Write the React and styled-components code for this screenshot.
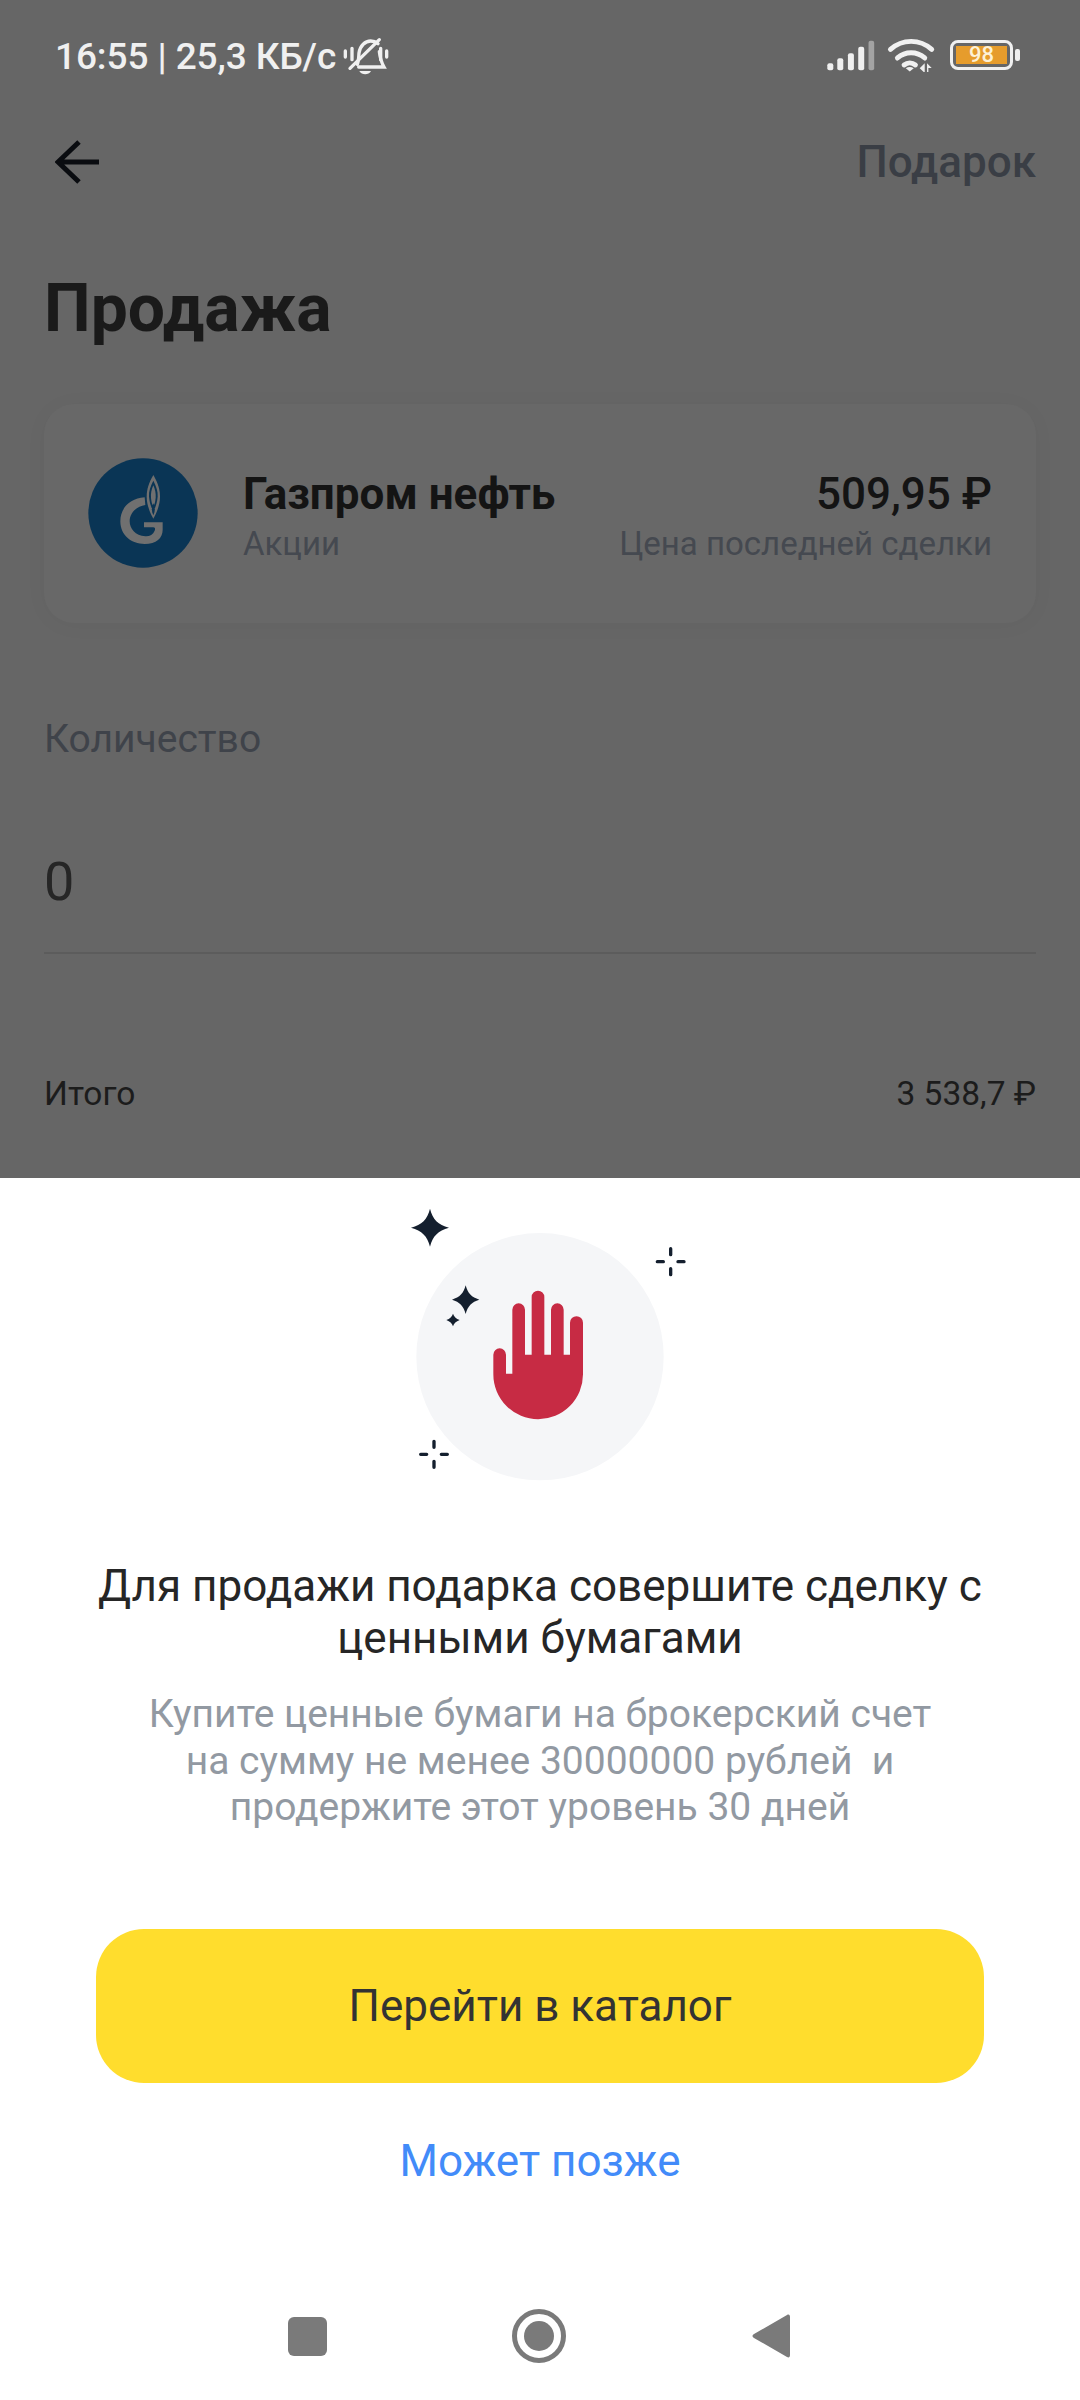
import styled, { createGlobalStyle } from 'styled-components'

const GlobalStyle = createGlobalStyle`
	html, body {
		margin: 0;
		padding: 0;
		background: #fff;
	}
	* {
		box-sizing: border-box;
	}
	body {
		font-family: Roboto, "Noto Sans", sans-serif;
	}
`

const Screen = styled.div`
	width: 1080px;
	height: 2400px;
	display: flex;
	flex-direction: column;
	overflow: hidden;
`

const Dimmed = styled.div`
	height: 1178px;
	background: #666666;
	padding: 0 44px;
	overflow: hidden;
`

const StatusBar = styled.div`
	height: 112px;
	display: flex;
	align-items: center;
	justify-content: space-between;
	padding: 0 0 0 11px;
	color: #f0f0f0;
`

const StatusLeft = styled.div`
	display: flex;
	align-items: center;
	gap: 4px;
	font-size: 37px;
	font-weight: 500;
	letter-spacing: -0.1px;
`

const StatusRight = styled.div`
	display: flex;
	align-items: center;
	gap: 7px;
	margin-right: 23px;
	margin-bottom: 2px;
`

const Battery = styled.div`
	width: 63px;
	height: 30px;
	border: 3px solid #f0f0f0;
	border-radius: 8px;
	padding: 3px;
	position: relative;
	&::after {
		content: '';
		position: absolute;
		right: -10px;
		top: 6px;
		width: 5px;
		height: 12px;
		border-radius: 2px;
		background: #f0f0f0;
	}
`

const BatteryFill = styled.div`
	height: 100%;
	background: #e69c2c;
	color: #fdf1d6;
	font-size: 22px;
	font-weight: 500;
	line-height: 18px;
	text-align: center;
`

const NavRow = styled.div`
	margin-top: 12px;
	height: 76px;
	display: flex;
	align-items: center;
	justify-content: space-between;
	padding-left: 11px;
	color: #3a3e45;
	font-size: 44px;
	font-weight: 500;
`

const Title = styled.h1`
	margin: 71px 0 0;
	font-size: 66px;
	line-height: 76px;
	font-weight: 700;
	color: #1a1a1a;
`

const Card = styled.div`
	margin-top: 57px;
	height: 219px;
	background: #686868;
	border-radius: 30px;
	box-shadow: 0 2px 24px rgba(0, 0, 0, 0.03);
	padding: 0 44px 2px;
	display: flex;
	align-items: center;
	gap: 45px;
`

const CardInfo = styled.div`
	flex: ${props => (props.$right ? 'none' : 1)};
	display: flex;
	flex-direction: column;
	gap: 6px;
	padding-top: 6px;
	align-items: ${props => (props.$right ? 'flex-end' : 'flex-start')};
	white-space: nowrap;
`

const CardTitle = styled.div`
	font-size: 44px;
	line-height: 50px;
	font-weight: ${props => props.$weight || 700};
	color: #141414;
`

const CardSub = styled.div`
	font-size: 33px;
	line-height: 38px;
	color: #454950;
`

const FieldLabel = styled.div`
	margin-top: 95px;
	font-size: 39px;
	line-height: 42px;
	color: #3f434a;
`

const FieldInput = styled.div`
	margin-top: 90px;
	height: 104px;
	font-size: 54px;
	line-height: 64px;
	color: #262626;
	border-bottom: 2px solid #5c5c5c;
`

const TotalRow = styled.div`
	margin-top: 121px;
	display: flex;
	justify-content: space-between;
	font-size: 33.500px;
	line-height: 38px;
	color: #1c1c1c;
`

const Sheet = styled.div`
	flex: 1;
	background: #fff;
	padding-top: 2px;
	display: flex;
	flex-direction: column;
	align-items: center;
`

const Heading = styled.div`
	width: 900px;
	margin-top: 60px;
	text-align: center;
	font-size: 44px;
	line-height: 52px;
	color: #262626;
`

const Description = styled.div`
	margin-top: 27px;
	text-align: center;
	font-size: 39px;
	line-height: 46.500px;
	color: #9299a2;
	white-space: pre-wrap;
`

const PrimaryButton = styled.button`
	margin-top: 98px;
	width: 888px;
	height: 154px;
	flex-shrink: 0;
	border: 0;
	border-radius: 48px;
	background: #ffdd2d;
	color: #333333;
	font-family: inherit;
	font-size: 44px;
`

const TextButton = styled.button`
	margin-top: 53px;
	border: 0;
	padding: 0;
	background: none;
	color: #428bf9;
	font-family: inherit;
	font-size: 44px;
	line-height: 50px;
`

const SystemNav = styled.div`
	margin-top: auto;
	height: 92px;
	margin-bottom: 18px;
	width: 100%;
	display: flex;
	align-items: center;
	justify-content: center;
	padding-right: 3px;
`

const BellIcon = () => (
	<svg width="60" height="50" viewBox="0 0 180 150">
		<g fill="none" stroke="#f0f0f0" strokeWidth="10" strokeLinecap="round">
			<path d="M16 60v18M36 52v34M122 52v34M140 60v18" />
			<path d="M52 100c4-10 4-22 5-34C60 44 76 30 92 30c8 0 16 3 22 8" />
			<path d="M118 62c2 18 6 32 14 46H56" />
			<path d="M30 112 118 26" />
		</g>
		<path d="M58 120c7 13 28 13 35 0z" fill="#f0f0f0" />
	</svg>
)

const SignalWifi = () => (
	<svg width="123" height="50" viewBox="0 0 370 150">
		<g fill="#f0f0f0">
			<rect x="22" y="100" width="18" height="21" rx="6" />
			<rect x="52" y="85" width="18" height="36" rx="6" />
			<rect x="84" y="70" width="18" height="51" rx="6" />
			<rect x="115" y="50" width="18" height="71" rx="6" />
		</g>
		<rect x="146" y="32" width="17" height="89" rx="6" fill="#a3a3a3" />
		<g fill="none" stroke="#f0f0f0" strokeWidth="15" strokeLinecap="round">
			<path d="M212 58c36-32 88-32 124 0" />
			<path d="M233 84c24-21 58-21 82 0" />
			<path d="M253 105c10-8 24-8 34 0" />
		</g>
		<path d="M258 115c7-5 17-5 24 0l-12 10z" fill="#f0f0f0" />
		<path d="M315 100v26h-3l-12-11zM322 100v26h4v-12h10z" fill="#f0f0f0" />
	</svg>
)

const BackArrow = () => (
	<svg width="44" height="44" viewBox="0 0 44 44" fill="none" stroke="#0a0c10" strokeWidth="5">
		<path d="M44 22H4M24 2 3 22l21 20" />
	</svg>
)

const GazpromLogo = () => (
	<svg width="110" height="110" viewBox="0 0 330 330">
		<circle cx="165" cy="165" r="164" fill="#0a3555" />
		<path
			d="M170 118C125 122 97 150 97 190c0 42 33 68 73 68 35 0 54-18 54-43v-22h-56v15h28c6 0 6 6 4 10-5 12-16 18-28 17-30-2-47-23-47-45 0-25 20-45 47-49z"
			fill="#707070"
		/>
		<path d="M196 51c-14 24-20 44-20 65 0 24 10 49 20 66 10-17 20-42 20-66 0-21-6-41-20-65z" fill="#707070" />
		<path d="M196 68c-9 17-14 32-13 48 1 14 5 26 8 34h10c3-8 7-20 8-34 1-16-4-31-13-48z" fill="#0a3555" />
		<path d="M196 82c-6 13-8 26-7 38 1 10 3 18 5 22h4c2-4 4-12 5-22 1-12-1-25-7-38z" fill="#707070" />
		<path d="M196 136c-6 12-6 24 0 36 6-12 6-24 0-36z" fill="#0a3555" />
	</svg>
)

const HandIllustration = () => (
	<svg width="320" height="320" viewBox="0 0 960 960">
		<circle cx="480" cy="530" r="371" fill="#f5f6f8" />
		<path
			d="M340 524a19 19 0 0 1 38 0v57h19V389a19 19 0 0 1 38 0v135h20V351a19 19 0 0 1 38 0v173h20V389a19 19 0 0 1 38 0v135h19V428a19.500 19.500 0 0 1 39 0v155a134.500 134.500 0 0 1-269 0z"
			fill="#c72b44"
		/>
		<g fill="#141f2e">
			<path d="M150 86c8 32 24 48 57 57-33 9-49 25-57 57-8-32-24-48-57-57 33-9 49-25 57-57z" />
			<path d="M257 316c6 24 18 36 41 43-23 7-35 19-41 43-6-24-18-36-41-43 23-7 35-19 41-43z" />
			<path d="M219 401c3 9 9 15 20 19-11 4-17 10-20 19-3-9-9-15-20-19 11-4 17-10 20-19z" />
		</g>
		<g stroke="#141f2e" strokeWidth="10" strokeLinecap="round">
			<path d="M872 206v18M872 266v18M832 245h18M894 245h18" />
			<path d="M162 784v18M162 844v18M122 823h18M184 823h18" />
		</g>
	</svg>
)

const RecentIcon = styled.div`
	width: 39px;
	height: 39px;
	border-radius: 6px;
	background: #7a7a7a;
`

const HomeIcon = styled.div`
	width: 54px;
	height: 54px;
	margin-left: 185px;
	border: 5px solid #7a7a7a;
	border-radius: 50%;
	display: flex;
	align-items: center;
	justify-content: center;
	&::after {
		content: '';
		width: 30px;
		height: 30px;
		border-radius: 50%;
		background: #7a7a7a;
	}
`

const BackIconBox = styled.div`
	margin-left: 186px;
	display: flex;
`

const BackIcon = () => (
	<BackIconBox>
		<svg width="38" height="46" viewBox="0 0 38 46">
			<path d="M35 2 2 21c-2 1-2 3 0 4l33 19c2 1 3 0 3-2V4c0-2-1-3-3-2z" fill="#7a7a7a" />
		</svg>
	</BackIconBox>
)

function App() {
	return (
		<Screen>
			<GlobalStyle />
			<Dimmed>
				<StatusBar>
					<StatusLeft>
						<span>16:55 | 25,3 КБ/с</span>
						<BellIcon />
					</StatusLeft>
					<StatusRight>
						<SignalWifi />
						<Battery>
							<BatteryFill>98</BatteryFill>
						</Battery>
					</StatusRight>
				</StatusBar>
				<NavRow>
					<BackArrow />
					<span>Подарок</span>
				</NavRow>
				<Title>Продажа</Title>
				<Card>
					<GazpromLogo />
					<CardInfo>
						<CardTitle>Газпром нефть</CardTitle>
						<CardSub>Акции</CardSub>
					</CardInfo>
					<CardInfo $right>
						<CardTitle $weight={500}>509,95 ₽</CardTitle>
						<CardSub>Цена последней сделки</CardSub>
					</CardInfo>
				</Card>
				<FieldLabel>Количество</FieldLabel>
				<FieldInput>0</FieldInput>
				<TotalRow>
					<span>Итого</span>
					<span>3 538,7 ₽</span>
				</TotalRow>
			</Dimmed>
			<Sheet>
				<HandIllustration />
				<Heading>Для продажи подарка совершите сделку с ценными бумагами</Heading>
				<Description>
					{'Купите ценные бумаги на брокерский счет\nна сумму не менее 30000000 рублей  и\nпродержите этот уровень 30 дней'}
				</Description>
				<PrimaryButton>Перейти в каталог</PrimaryButton>
				<TextButton>Может позже</TextButton>
				<SystemNav>
					<RecentIcon />
					<HomeIcon />
					<BackIcon />
				</SystemNav>
			</Sheet>
		</Screen>
	)
}

export default App
